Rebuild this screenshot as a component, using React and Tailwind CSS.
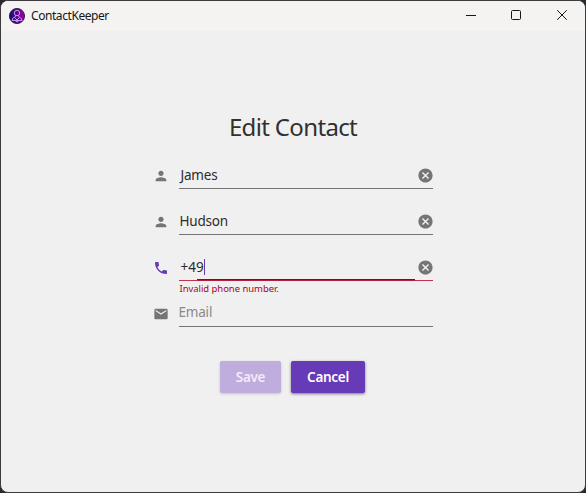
import React from "react";

const PATHS = {
  person:
    "M12 12c2.21 0 4-1.79 4-4s-1.79-4-4-4-4 1.79-4 4 1.79 4 4 4zm0 2c-2.67 0-8 1.34-8 4v2h16v-2c0-2.66-5.33-4-8-4z",
  phone:
    "M6.62 10.79c1.44 2.83 3.76 5.14 6.59 6.59l2.2-2.2c.27-.27.67-.36 1.02-.24 1.12.37 2.33.57 3.57.57.55 0 1 .45 1 1V20c0 .55-.45 1-1 1-9.39 0-17-7.61-17-17 0-.55.45-1 1-1h3.5c.55 0 1 .45 1 1 0 1.25.2 2.45.57 3.57.11.35.03.74-.25 1.02l-2.2 2.2z",
  email:
    "M20 4H4c-1.1 0-1.99.9-1.99 2L2 18c0 1.1.9 2 2 2h16c1.1 0 2-.9 2-2V6c0-1.1-.9-2-2-2zm0 4l-8 5-8-5V6l8 5 8-5v2z",
  clear:
    "M12 2C6.47 2 2 6.47 2 12s4.47 10 10 10 10-4.47 10-10S17.53 2 12 2zm5 13.59L15.59 17 12 13.41 8.41 17 7 15.59 10.59 12 7 8.41 8.41 7 12 10.59 15.59 7 17 8.41 13.41 12 17 15.59z",
};

function Icon({ name, className }) {
  return (
    <svg viewBox="0 0 24 24" fill="currentColor" className={className}>
      <path d={PATHS[name]} />
    </svg>
  );
}

function Logo() {
  return (
    <svg viewBox="0 0 16 16" className="size-4 shrink-0">
      <defs>
        <linearGradient id="logo" x1="0" y1="0" x2="1" y2="0">
          <stop offset="0" stopColor="#150a78" />
          <stop offset="1" stopColor="#a800a0" />
        </linearGradient>
      </defs>
      <circle cx="8" cy="8" r="7.6" fill="url(#logo)" stroke="#190b3c" strokeWidth="0.8" />
      <g fill="none" stroke="#b99aec" strokeWidth="1">
        <circle cx="8" cy="5" r="2.7" />
        <path d="M6.4 7.3v1.4L3.8 10.2 3 12.5h10l-.8-2.3-2.6-1.5V7.3M5.6 9.5 8 12l2.4-2.5M6 12.3l2 1.8 2-1.8" />
      </g>
    </svg>
  );
}

function Field({ icon, value, placeholder, error, textClass }) {
  return (
    <div className="flex h-[46px] items-end">
      <div className="flex h-[27px] w-[26px] shrink-0 items-center">
        <Icon name={icon} className={error ? "size-4 text-[#673ab7]" : "size-4 text-[#757575]"} />
      </div>
      <div
        className={
          error
            ? "relative flex h-[27px] w-[254px] justify-between border-b border-[#c4314b]"
            : "relative flex h-[27px] w-[254px] justify-between border-b border-[#757575]"
        }
      >
        <div className="flex items-center">
          <span className={textClass}>{value || placeholder}</span>
          {error && <span className="h-4 w-px bg-[#673ab7]" />}
        </div>
        {value && <Icon name="clear" className="-mr-px mt-[5px] size-[17px] text-[#757575]" />}
        {error && (
          <>
            <span className="absolute -bottom-px left-[18px] h-0.5 w-[218px] border-t border-[#99001f] bg-[#b81f3c]" />
            <span className="absolute left-px top-[29px] whitespace-nowrap text-[9.5px] leading-3 tracking-[-0.05px] text-[#b00020]">
              {error}
            </span>
          </>
        )}
      </div>
    </div>
  );
}

export default function App() {
  return (
    <div className="h-[493px] w-[586px] overflow-hidden bg-[#29292b] font-['Noto_Sans','Open_Sans',sans-serif]">
      <div className="flex h-full flex-col overflow-hidden rounded-lg border border-[#3b3b3d] bg-[#f0f0f0]">
        <header className="flex h-[30px] shrink-0 items-center justify-between bg-[#f4f3f1] pl-2 text-[#171717]">
          <div className="flex items-center gap-1.5">
            <Logo />
            <span className="text-[12px] leading-4 tracking-[-0.43px]">ContactKeeper</span>
          </div>
          <div className="flex">
            <svg viewBox="0 0 46 30" className="h-[30px] w-[46px]" fill="none" stroke="#171717">
              <path d="M19 14.5h10" />
            </svg>
            <svg viewBox="0 0 46 30" className="h-[30px] w-[46px]" fill="none" stroke="#171717">
              <rect x="18.5" y="9.5" width="9" height="9" rx="1" />
            </svg>
            <svg viewBox="0 0 46 30" className="h-[30px] w-[46px]" fill="none" stroke="#171717">
              <path d="m18.2 9.2 9.6 9.6m0-9.6-9.6 9.6" />
            </svg>
          </div>
        </header>
        <main className="flex flex-col items-center">
          <h1 className="mt-20 h-8 text-[24px] leading-8 tracking-[-0.65px] text-[#303030]">
            Edit Contact
          </h1>
          <form className="mr-px w-[280px]">
            <Field icon="person" value="James" textClass="pl-[2px] text-[13.5px] leading-5 tracking-[-0.2px] text-[#2b2b2b]" />
            <Field icon="person" value="Hudson" textClass="pl-px text-[13.5px] leading-5 tracking-[-0.2px] text-[#2b2b2b]" />
            <Field
              icon="phone"
              value="+49"
              error="Invalid phone number."
              textClass="pl-[2px] text-[13.5px] leading-5 text-[#2b2b2b]"
            />
            <Field icon="email" placeholder="Email" textClass="pb-0.5 text-[13.5px] leading-5 tracking-[-0.2px] text-[#8a8a8a]" />
          </form>
          <div className="mr-[2px] mt-[34px] flex gap-[10px] text-[13.5px] font-semibold tracking-[-0.3px]">
            <button className="h-8 w-[61px] rounded-xs bg-[#bfaddd] pl-px text-[#f1ecf8] shadow-[0_1px_3px_rgba(0,0,0,0.18)]">
              Save
            </button>
            <button className="h-8 w-[74px] rounded-xs bg-[#673ab7] pl-px text-white shadow-[0_1px_3px_rgba(0,0,0,0.5)]">
              Cancel
            </button>
          </div>
        </main>
      </div>
    </div>
  );
}
